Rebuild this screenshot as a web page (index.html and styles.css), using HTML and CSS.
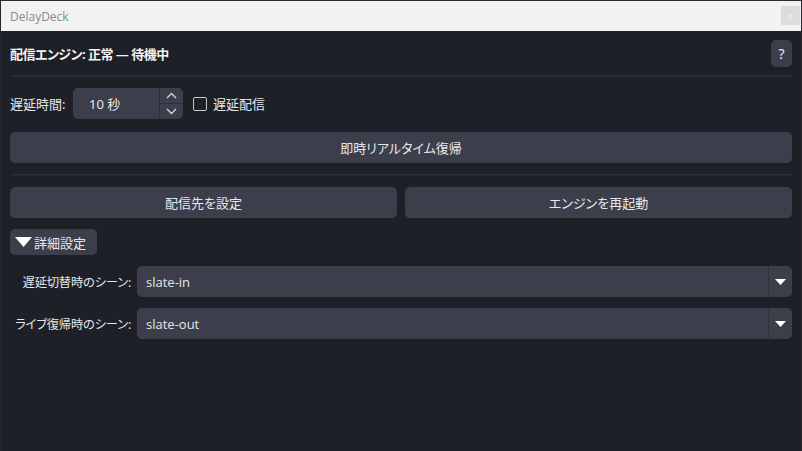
FILE: index.html
```html
<!DOCTYPE html>
<html lang="ja">
<head>
    <meta charset="UTF-8">
    <meta name="viewport" content="width=device-width, initial-scale=1.0">
    <title>DelayDeck</title>
    <link rel="stylesheet" href="styles.css">
</head>
<body>
    <div class="window">
        <div class="titlebar">
            <span class="title">DelayDeck</span>
            <div class="close">x</div>
        </div>
        <div class="content">
            <div class="header">
                <div class="status-row">
                    <div class="status">配信エンジン: 正常 — 待機中</div>
                    <div class="btn help">?</div>
                </div>
                <div class="sep"></div>
            </div>

            <div class="delay-row">
                <span class="label">遅延時間:</span>
                <div class="spin">
                    <span class="spin-value">10 秒</span>
                    <div class="spin-buttons">
                        <div class="spin-up">
                            <svg width="11" height="7" viewBox="0 0 11 7"><polyline points="1,6 5.5,1.5 10,6" fill="none" stroke="#d8d8dc" stroke-width="1.3"/></svg>
                        </div>
                        <div class="spin-down">
                            <svg width="11" height="7" viewBox="0 0 11 7"><polyline points="1,1 5.5,5.5 10,1" fill="none" stroke="#d8d8dc" stroke-width="1.3"/></svg>
                        </div>
                    </div>
                </div>
                <label class="check">
                    <span class="box"></span>
                    <span>遅延配信</span>
                </label>
            </div>

            <div class="btn wide">即時リアルタイム復帰</div>

            <div class="sep"></div>

            <div class="btn-pair">
                <div class="btn wide">配信先を設定</div>
                <div class="btn wide">エンジンを再起動</div>
            </div>

            <div class="btn toggle">
                <svg width="17" height="10" viewBox="0 0 17 10"><polygon points="0,0 17,0 8.5,10" fill="#ffffff"/></svg>
                <span>詳細設定</span>
            </div>

            <div class="form">
                <span class="form-label">遅延切替時のシーン:</span>
                <div class="combo">
                    <span class="combo-text">slate-in</span>
                    <div class="combo-arrow">
                        <svg width="11" height="6" viewBox="0 0 11 6"><polygon points="0,0 11,0 5.5,6" fill="#ffffff"/></svg>
                    </div>
                </div>
                <span class="form-label">ライブ復帰時のシーン:</span>
                <div class="combo">
                    <span class="combo-text">slate-out</span>
                    <div class="combo-arrow">
                        <svg width="11" height="6" viewBox="0 0 11 6"><polygon points="0,0 11,0 5.5,6" fill="#ffffff"/></svg>
                    </div>
                </div>
            </div>
        </div>
    </div>
</body>
</html>
```

FILE: styles.css
```css
* {
    box-sizing: border-box;
}

html, body {
    margin: 0;
    padding: 0;
    background: #1d2027;
}

body {
    font-family: "Noto Sans", "Noto Sans CJK JP", sans-serif;
    font-size: 13px;
    color: #e6e6ea;
    font-feature-settings: "palt";
}

.window {
    width: 802px;
    height: 451px;
    display: flex;
    flex-direction: column;
    border-top: 1px solid #2b2b2b;
    border-right: 1px solid #2a2a2e;
    border-left: 1px solid #24272d;
    background: #1d2027;
    overflow: hidden;
}

.titlebar {
    height: 30px;
    flex: none;
    background: #f2f2f2;
    display: flex;
    align-items: center;
    justify-content: space-between;
    padding: 0 1px 0 9px;
}

.title {
    font-family: "Open Sans", "Noto Sans", sans-serif;
    font-size: 12px;
    color: #8a8a8a;
}

.close {
    width: 19px;
    height: 19px;
    background: #dcdcdc;
    color: #f4f4f4;
    font-size: 9px;
    line-height: 19px;
    text-align: center;
    margin-bottom: 2px;
}

.content {
    flex: 1;
    display: flex;
    flex-direction: column;
    gap: 11px;
    padding: 9px 9px 0 9px;
}

.header {
    display: flex;
    flex-direction: column;
}

.status-row {
    height: 27px;
    display: flex;
    align-items: center;
    justify-content: space-between;
    margin-bottom: 8px;
}

.status {
    font-weight: bold;
    color: #f2f2f4;
    letter-spacing: -0.5px;
}

.sep {
    height: 2px;
    flex: none;
    border-top: 1px solid #2b2f38;
    border-bottom: 1px solid #23262e;
}

.btn {
    background: #3c3f4b;
    border-radius: 5px;
    color: #e8e8ec;
    display: flex;
    align-items: center;
    justify-content: center;
}

.help {
    width: 21px;
    height: 27px;
    font-size: 14px;
}

.wide {
    height: 31px;
    flex: none;
}

.delay-row {
    height: 31px;
    display: flex;
    align-items: center;
    margin-bottom: 2px;
}

.label {
    width: 63px;
}

.spin {
    width: 110px;
    height: 31px;
    background: #3c3f4b;
    border-radius: 5px;
    display: flex;
}

.spin-value {
    flex: 1;
    display: flex;
    align-items: center;
    padding-left: 16px;
}

.spin-buttons {
    width: 24px;
    display: flex;
    flex-direction: column;
    border-left: 1px solid #2e313b;
}

.spin-up,
.spin-down {
    flex: 1;
    display: flex;
    align-items: center;
    justify-content: center;
}

.spin-up {
    border-bottom: 1px solid #2e313b;
}

.check {
    display: flex;
    align-items: center;
    margin-left: 10px;
}

.box {
    width: 14px;
    height: 14px;
    border: 1px solid #c8c8cc;
    border-radius: 2px;
    margin-right: 6px;
}

.btn-pair {
    display: flex;
    gap: 8px;
}

.btn-pair .wide {
    flex: 1;
}

.toggle {
    width: 87px;
    height: 26px;
    justify-content: flex-start;
    padding-left: 5px;
    gap: 2px;
}

.form {
    display: grid;
    grid-template-columns: 121px 1fr;
    column-gap: 6px;
    row-gap: 11px;
    align-items: center;
}

.form-label {
    justify-self: end;
    white-space: nowrap;
    font-size: 12.3px;
    letter-spacing: -0.2px;
}

.combo {
    height: 31px;
    background: #3c3f4b;
    border-radius: 5px;
    display: flex;
}

.combo-text {
    flex: 1;
    display: flex;
    align-items: center;
    padding-left: 9px;
    font-family: "Open Sans", "Noto Sans", sans-serif;
}

.combo-arrow {
    width: 24px;
    border-left: 1px solid #30333d;
    display: flex;
    align-items: center;
    justify-content: center;
}
```
